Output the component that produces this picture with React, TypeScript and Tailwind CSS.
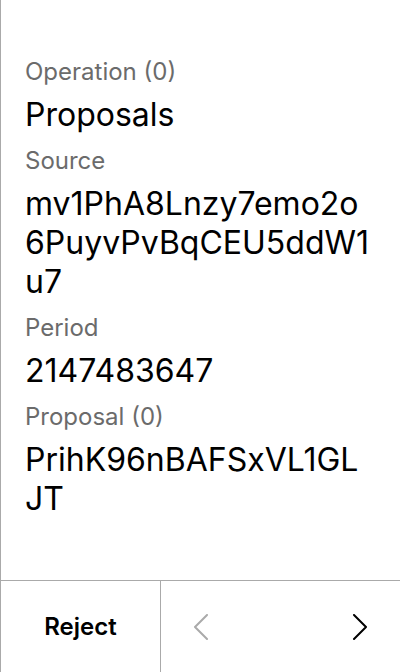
const fields = [
  { label: 'Operation (0)', value: 'Proposals' },
  { label: 'Source', value: 'mv1PhA8Lnzy7emo2o6PuyvPvBqCEU5ddW1u7' },
  { label: 'Period', value: '2147483647' },
  { label: 'Proposal (0)', value: 'PrihK96nBAFSxVL1GLJT' },
];

function Chevron({ dir, className }: { dir: 'left' | 'right'; className: string }) {
  return (
    <svg width="16" height="26" viewBox="0 0 16 26" fill="none" className={className}>
      <path
        d={dir === 'left' ? 'M14 1 L2 13 L14 25' : 'M2 1 L14 13 L2 25'}
        stroke="currentColor"
        strokeWidth="2"
        strokeLinecap="round"
        strokeLinejoin="round"
      />
    </svg>
  );
}

export default function App() {
  return (
    <div
      className="h-[672px] w-[400px] flex flex-col bg-white border-l border-[#aaaaaa]"
      style={{ fontFamily: 'Inter, "Noto Sans", sans-serif' }}
    >
      {/* Details */}
      <div className="flex-1 pt-[56px] pl-[24px] pr-[25px] flex flex-col gap-[11px]">
        {fields.map((f) => (
          <div key={f.label} className="flex flex-col gap-[7px]">
            <div className="text-[24px] leading-[32px] text-[#6b6b6b]">{f.label}</div>
            <div className="text-[32px] leading-[39px] text-black break-all">{f.value}</div>
          </div>
        ))}
      </div>

      {/* Footer */}
      <div className="h-[92px] flex border-t border-[#aaaaaa]">
        <button className="w-[160px] border-r border-[#aaaaaa] text-[24px] font-semibold text-black">
          Reject
        </button>
        <div className="flex-1 flex items-center justify-between pl-[32px] pr-[32px]">
          <Chevron dir="left" className="text-[#aaaaaa]" />
          <Chevron dir="right" className="text-black" />
        </div>
      </div>
    </div>
  );
}
